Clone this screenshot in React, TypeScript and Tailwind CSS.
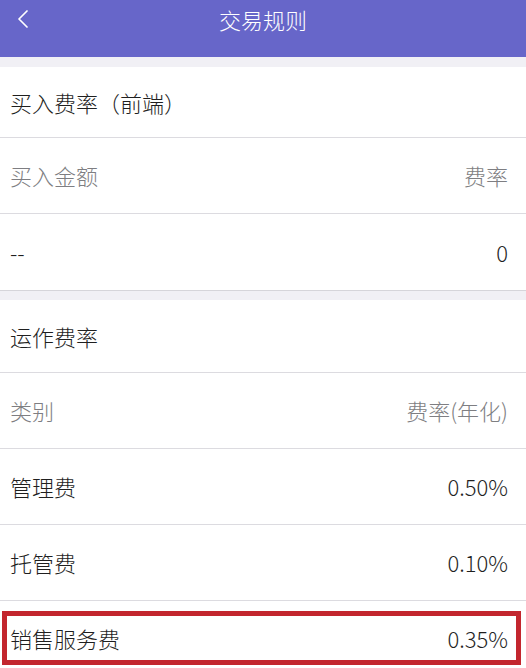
import { ChevronLeft } from 'lucide-react';

type Row = { left: string; right?: string; muted?: boolean };

const sections: { rows: Row[] }[] = [
  {
    rows: [
      { left: '买入费率（前端）' },
      { left: '买入金额', right: '费率', muted: true },
      { left: '--', right: '0' },
    ],
  },
  {
    rows: [
      { left: '运作费率' },
      { left: '类别', right: '费率(年化)', muted: true },
      { left: '管理费', right: '0.50%' },
      { left: '托管费', right: '0.10%' },
    ],
  },
];

const RuleRow = ({ row, last }: { row: Row; last?: boolean }) => (
  <div
    className={`flex items-center justify-between h-[76px] px-[10px] text-[22px] font-light ${
      last ? '' : 'border-b border-[#dcdbe0]'
    } ${row.muted ? 'text-[#7e7e82]' : 'text-[#1f1f1f]'}`}
  >
    <span>{row.left}</span>
    {row.right && <span className="pr-[8px]">{row.right}</span>}
  </div>
);

const App = () => {
  return (
    <div
      className="w-[526px] h-[668px] overflow-hidden bg-[#f1f0f5]"
      style={{ fontFamily: '"Noto Sans CJK SC", "Noto Sans", sans-serif' }}
    >
      <header className="relative h-[57px] bg-[#6766c9] flex items-start justify-center">
        <ChevronLeft className="absolute left-[7px] top-[3px] w-[32px] h-[32px] text-white" strokeWidth={1.3} />
        <h1 className="mt-[4px] text-[22px] leading-[30px] font-light text-white">交易规则</h1>
      </header>

      <div className="h-[10px]" />

      <section className="bg-white border-b border-[#d6d5da]">
        <div className="flex items-center h-[71px] px-[10px] text-[22px] font-light text-[#1f1f1f] border-b border-[#dcdbe0]">
          {sections[0].rows[0].left}
        </div>
        {sections[0].rows.slice(1).map((r, i, a) => (
          <RuleRow key={i} row={r} last={i === a.length - 1} />
        ))}
      </section>

      <div className="h-[9px]" />

      <section className="bg-white">
        <div className="flex items-center h-[73px] px-[10px] text-[22px] font-light text-[#1f1f1f] border-b border-[#dcdbe0]">
          {sections[1].rows[0].left}
        </div>
        {sections[1].rows.slice(1).map((r, i) => (
          <RuleRow key={i} row={r} />
        ))}
        {/* highlighted row with the red frame drawn over it */}
        <div className="relative flex items-center justify-between h-[76px] px-[10px] pb-[18px] text-[22px] font-light text-[#1f1f1f]">
          <span className="pt-[16px]">销售服务费</span>
          <span className="pt-[16px] pr-[8px]">0.35%</span>
          <div className="absolute left-[2px] right-[5px] top-[10px] h-[54px] border-[5px] border-[#c3262e]" />
        </div>
      </section>
    </div>
  );
};

export default App;
